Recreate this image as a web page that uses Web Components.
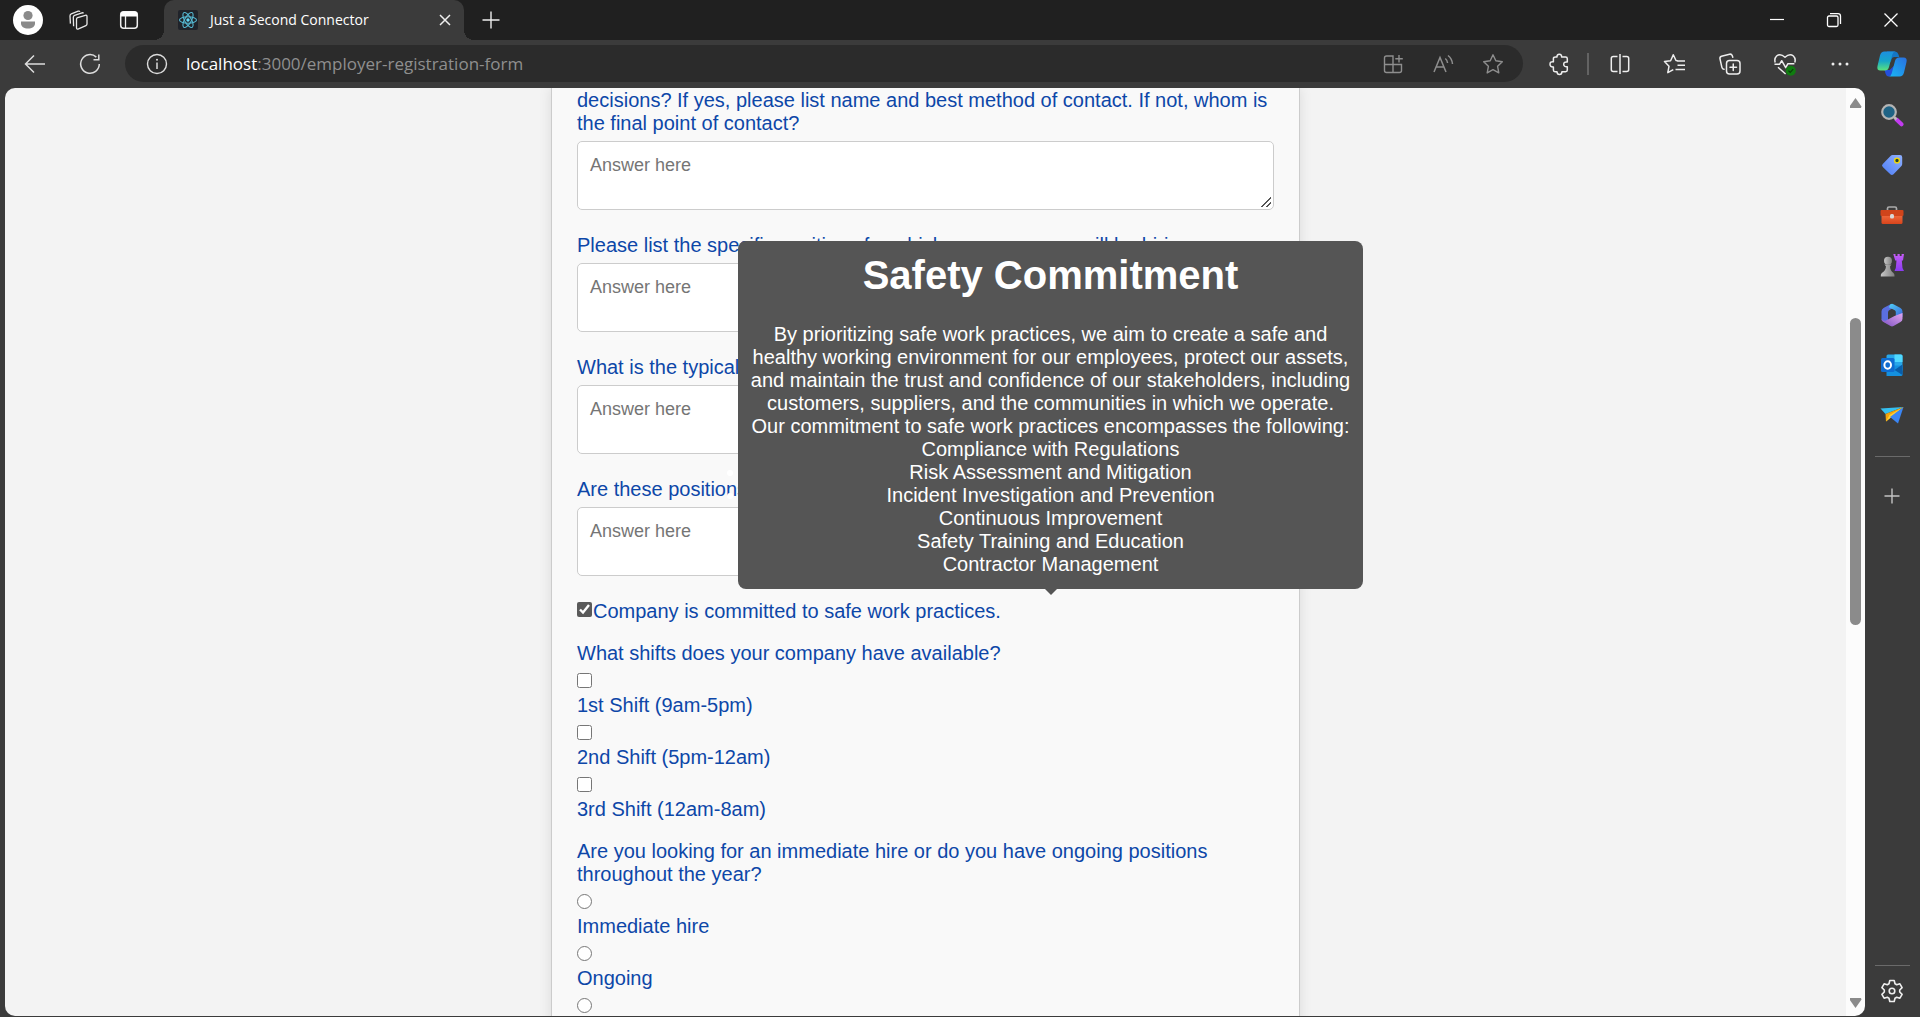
<!DOCTYPE html>
<html lang="en">
<head>
<meta charset="utf-8">
<title>Just a Second Connector</title>
<style>
  html, body { height: 100%; margin: 0; }
  body { background: #3b3b3b; font-family: "Liberation Sans", Arial, sans-serif; font-size: 20px; line-height: 23px; overflow: hidden; }
</style>
</head>
<body>
<browser-window></browser-window>

<script>
const GRADIENTS = `<defs>
  <linearGradient id="g1" x1="0" y1="0" x2="0" y2="1"><stop offset="0" stop-color="#1d8fe0"/><stop offset=".5" stop-color="#16a5c9"/><stop offset="1" stop-color="#5be37c"/></linearGradient>
  <linearGradient id="g2" x1="1" y1="0" x2="0" y2="1"><stop offset="0" stop-color="#2a6fe0"/><stop offset="1" stop-color="#18b8f5"/></linearGradient>
  <linearGradient id="g3" x1="1" y1="0" x2="0" y2="1"><stop offset="0" stop-color="#8fb0ff"/><stop offset="1" stop-color="#4d7df5"/></linearGradient>
  <linearGradient id="g4" x1="0" y1="0" x2="0" y2="1"><stop offset="0" stop-color="#f0683c"/><stop offset="1" stop-color="#d8451c"/></linearGradient>
  <linearGradient id="g5" x1="0" y1="0" x2="1" y2="0"><stop offset="0" stop-color="#c8c8c8"/><stop offset="1" stop-color="#7f7f7f"/></linearGradient>
  <linearGradient id="g6" x1="0" y1="0" x2="0" y2="1"><stop offset="0" stop-color="#c45cf5"/><stop offset="1" stop-color="#8a3cf0"/></linearGradient>
  <linearGradient id="g7" x1="0" y1="0" x2="1" y2="1"><stop offset="0" stop-color="#4fd0f5"/><stop offset="1" stop-color="#3a63d8"/></linearGradient>
  <linearGradient id="g8" x1="0" y1="1" x2="1" y2="0"><stop offset="0" stop-color="#7b4fc0"/><stop offset="1" stop-color="#e3a8f0"/></linearGradient>
</defs>`;

const ICONS = {
  avatar: [32, `<circle cx="16" cy="16" r="15" fill="#fff"/><circle cx="16" cy="11.5" r="4.6" fill="#8a8a8a"/><path d="M9 17.5h14v2c0 3-3 5-7 5s-7-2-7-5z" fill="#8a8a8a"/>`],
  workspaces: [24, `<g fill="none" stroke="#e8e8e8" stroke-width="1.3" stroke-linejoin="round"><path d="M10.500 11.200q0-1.200 1.200-1.600l7.600-2.300q1.700-.4 1.700 1.200v7.500q0 1.100-1.100 1.600l-7.400 3.300q-2 .7-2-1.200z"/><path d="M7.600 18.300 7.300 9.300q0-1.400 1.300-1.900l7.400-2.600q1-.3 1.500.5"/><path d="M4.400 15.600 4 8q0-1.600 1.300-2.100l6.900-2.700q1.300-.4 1.700.5"/></g>`],
  tabactions: [24, `<rect x="3.700" y="3.700" width="16.600" height="16.600" rx="3" fill="none" stroke="#f0f0f0" stroke-width="1.500"/><path d="M3.700 8.500V6.500q0-3 3-3h10.600q3 0 3 3v2z" fill="#fff"/><path d="M8.500 8v12" stroke="#f0f0f0" stroke-width="1.300"/>`],
  react: [20, `<rect width="20" height="20" rx="2" fill="#20232a"/><g fill="none" stroke="#56b9d3" stroke-width="1.100"><ellipse cx="10" cy="10" rx="8.500" ry="3.300"/><ellipse cx="10" cy="10" rx="8.500" ry="3.300" transform="rotate(60 10 10)"/><ellipse cx="10" cy="10" rx="8.500" ry="3.300" transform="rotate(120 10 10)"/></g><circle cx="10" cy="10" r="1.700" fill="#61dafb"/>`],
  close: [24, `<path d="M7 7l10 10M17 7 7 17" stroke="#eee" stroke-width="1.500"/>`],
  plus: [24, `<path d="M3.500 12h17M12 3.500v17" stroke="#eee" stroke-width="1.400"/>`],
  plusdim: [24, `<path d="M4.500 12h15M12 4.500v15" stroke="#c4c4c4" stroke-width="1.400"/>`],
  back: [24, `<path d="M22 12H2.500M11 3.500 2.500 12l8.500 8.500" fill="none" stroke="#ddd" stroke-width="1.500"/>`],
  reload: [24, `<path d="M21.300 12a9.300 9.300 0 1 1-3-6.900M20.800 2.500v5.200h-5.300" fill="none" stroke="#ddd" stroke-width="1.500"/>`],
  info: [24, `<circle cx="12" cy="12" r="9.500" fill="none" stroke="#ddd" stroke-width="1.400"/><path d="M12 10.500v6.500" stroke="#ddd" stroke-width="1.500"/><circle cx="12" cy="7.700" r="1" fill="#ddd"/>`],
  apps: [24, `<g fill="none" stroke="#8e8e8e" stroke-width="1.400"><path d="M12 12.500V4H5.500Q3.500 4 3.500 6v12.500q0 2 2 2h13q2 0 2-2v-6h-17M12 12.500v8M18 3v7.500M14.300 6.800h7.500"/></g>`],
  aloud: [24, `<g fill="none" stroke="#8e8e8e" stroke-width="1.500"><path d="M3 20 9 5.500 15 20M5.200 15h7.700M14.300 6.500q2 1.700 2.300 4.500M17 3.500q4 3 4.500 8.500"/></g>`],
  star: [24, `<path d="M12 2.800l2.800 6 6.500.9-4.700 4.600 1.200 6.600-5.800-3.200-5.800 3.200 1.200-6.600-4.700-4.600 6.500-.9z" fill="none" stroke="#8e8e8e" stroke-width="1.400" stroke-linejoin="round"/>`],
  puzzle: [24, `<path d="M8.500 5H10q-.2-2.700 2.300-2.700T14.600 5h4q1.700 0 1.700 1.700V10q-3.600-.4-3.600 2.300t3.600 2.400v3.400q0 1.600-1.700 1.600h-3.700q0 2.800-2.400 2.800T10 19.700H8q-1.600 0-1.600-1.600V15q-3.400.2-3.400-2.700t3.400-2.500V6.600Q6.400 5 8.500 5z" fill="none" stroke="#eee" stroke-width="1.500" stroke-linejoin="round"/>`],
  split: [24, `<g fill="none" stroke="#eee" stroke-width="1.500"><path d="M9.500 4.500H5.300q-2 0-2 2v11q0 2 2 2h4.200M14.500 4.500h4.200q2 0 2 2v11q0 2-2 2h-4.200M12 2v20"/></g>`],
  favlist: [24, `<g fill="none" stroke="#eee" stroke-width="1.500" stroke-linejoin="round"><path d="M14.700 8.800 13 8.500 10.300 2.800 7.600 8.700l-6.100.9 4.500 4.700-1.200 6.400 5.500-3M14 9h8M14.500 13.300H22M12.500 17.500H22"/></g>`],
  collections: [24, `<g fill="none" stroke="#eee" stroke-width="1.500" stroke-linecap="round"><rect x="8.500" y="8.500" width="13.500" height="13.500" rx="3"/><path d="M15.250 12v6.500M12 15.250h6.500M6 17.300q-1.700-.3-2.100-2L2 6.800q-.4-2 1.500-2.600L11.500 2.200q2-.4 2.700 1.400l.6 1.600"/></g>`],
  heart: [24, `<g fill="none" stroke="#eee" stroke-width="1.500" stroke-linejoin="round"><path d="M2.200 10.500Q1 6.500 3.600 4q3.800-3 8.400 1.300Q16.600 1 20.400 4q2.600 2.500 1.400 6.500"/><path d="M1.500 12.300h5l2.200-3.600 4 7 2.200-4h6.500M5 15.300l7.600 6.700"/></g><circle cx="17.800" cy="18.700" r="5" fill="#107c10"/><path d="M15.500 18.700l1.700 1.700 3-3.200" fill="none" stroke="#0a3d0a" stroke-width="1.200"/>`],
  dots: [24, `<circle cx="5" cy="12" r="1.500" fill="#eee"/><circle cx="12" cy="12" r="1.500" fill="#eee"/><circle cx="19" cy="12" r="1.500" fill="#eee"/>`],
  copilot: [32, GRADIENTS + `<path d="M19 3.500q2.500 0 3.300 2.500l1 3h-5q-2 0-2.700 2l-1 3.500L11 3.500z" fill="#1576c4"/><path d="M13 28.500q-2.500 0-3.300-2.500l-1.200-4h5.200l4-4 3 6.500z" fill="#2450dd"/><path d="M8.500 3.500h11q-2.300 0-3.200 3L13 19q-.9 3.500-4 3.500H4.500Q.5 22.500 1.500 18L4 7.500q1-4 4.500-4z" fill="url(#g1)"/><path d="M23.500 28.500h-11q2.300 0 3.200-3L19 13q.9-3.500 4-3.500h4.500q4 0 3 4.500L28 24.500q-1 4-4.500 4z" fill="url(#g2)"/>`],
  min: [24, `<path d="M5 11.500h14" stroke="#fff" stroke-width="1.200"/>`],
  restore: [24, `<g fill="none" stroke="#fff" stroke-width="1.300"><rect x="5.500" y="8" width="10.500" height="10.500" rx="1.500"/><path d="M8 5.600h8q2.500 0 2.500 2.500v8"/></g>`],
  exit: [24, `<path d="M5.500 5.500l13 13M18.500 5.500l-13 13" stroke="#fff" stroke-width="1.300"/>`],
  search: [24, `<path d="M16.500 16.500l5 4.800" stroke="#c23bf0" stroke-width="4" stroke-linecap="round"/><path d="M14 14l2.500 2.500" stroke="#bbb" stroke-width="2.500"/><circle cx="9" cy="9" r="6.800" fill="#1f6385" stroke="#b4b4b4" stroke-width="2.200"/>`],
  tag: [24, GRADIENTS + `<path d="M12.500 2H20q2.200 0 2.200 2.200V11q0 1.300-1 2.300l-7.700 8q-1.600 1.500-3.200 0l-7.500-7.200q-1.600-1.500 0-3L10.500 3q.9-1 2-1z" fill="url(#g3)"/><circle cx="17" cy="7.500" r="2.400" fill="#243" stroke="#f5d90a" stroke-width="1.400"/>`],
  toolbox: [24, GRADIENTS + `<path d="M7.500 7V5.500Q7.500 4 9 4h6q1.500 0 1.500 1.500V7" fill="none" stroke="#aaa" stroke-width="1.700"/><rect x="1.500" y="12" width="21" height="9" rx="1.500" fill="url(#g4)"/><rect x=".5" y="7" width="23" height="6" rx="1" fill="#d0441b"/><rect x="10" y="11" width="4" height="4.500" rx="1.500" fill="#d8d8d8"/>`],
  chess: [24, GRADIENTS + `<path d="M13.300 1h2.200v2h2V1h2.200v2h1.900V1H24l-1 6.500h-1.200l.7 7.500 1.500 3h-9.500l1.300-3 .7-7.500h-1.300z" fill="url(#g6)"/><circle cx="8" cy="7.800" r="4" fill="url(#g5)"/><path d="M4.500 11.500h7L10 13.500q.2 4 3.500 6.500 1.300 1.200 1 3.500H.8q-.3-2.300 1-3.500 3.900-2.500 4.200-6.500z" fill="url(#g5)"/>`],
  m365: [24, GRADIENTS + `<path d="M10.500 1.200 3.500 5Q1.500 6.200 1.500 8.500V16q0 1.500 1.300 2.300L8 21V9.500q0-1.700 1.500-2.500L15 4l-2-2.300q-1.200-1.200-2.500-.5z" fill="#5a6fe0"/><path d="M10.500 1.200q1.500-.8 3 0L20.500 5q2 1.200 2 3.500V14l-6.700-1V9q0-1.200-1-1.700L8.700 4.200z" fill="url(#g7)"/><path d="M22.500 10v5.700q0 2.200-2 3.400l-7 3.900q-1.500.8-3 0L3 18.700q-1.500-1-1.500-3 2 3 5 1.500l8-4.200z" fill="url(#g8)"/>`],
  outlook: [24, `<rect x="6.500" y="1.500" width="16" height="17" rx="1.500" fill="#28a8ea"/><path d="M14.500 1.500H21q1.500 0 1.500 1.500v6h-8z" fill="#50d9ff"/><path d="M6.500 12.500l16 0v9q0 1.500-1.500 1.500H6.500z" fill="#1490df"/><path d="M22.500 11.500V22l-8-5z" fill="#0a5da8"/><rect x="1" y="5" width="13.500" height="14" rx="1.500" fill="#0f6cd0"/><ellipse cx="7.700" cy="12" rx="3.300" ry="3.700" fill="none" stroke="#fff" stroke-width="2"/>`],
  send: [24, `<path d="M.5 5.500 23.500 4 5.500 11z" fill="#35c0f0"/><path d="M23.500 4 5.500 11l.5 7.500z" fill="#f5a40a"/><path d="M23.500 4 6 18.500l3.500-6.500z" fill="#ffcf33"/><path d="M23.500 4 18 20.500 10 14z" fill="#3a86f5"/>`],
  gear: [24, `<g fill="none" stroke="#eee" stroke-width="1.600" stroke-linejoin="round"><path d="M9.800 1.500h4.400l.8 3.300 1.700 1 3.200-1 2.200 3.900-2.400 2.300v2l2.400 2.300-2.200 3.900-3.200-1-1.700 1-.8 3.300H9.800L9 19.200l-1.700-1-3.200 1-2.200-3.900L4.300 13v-2L1.900 8.700l2.200-3.900 3.200 1 1.700-1z"/><circle cx="12" cy="12" r="2.800"/></g>`]
};

const define = (name, html, init) => {
  const template = document.createElement('template');
  template.innerHTML = html;
  customElements.define(name, class extends HTMLElement {
    constructor() {
      super();
      this.attachShadow({ mode: 'open' }).append(template.content.cloneNode(true));
    }
    connectedCallback() { if (init) init(this, this.shadowRoot); }
  });
};

/* Icon looked up by name, sized by --size */
define('ui-icon', `<style>
  :host { display: block; width: var(--size, 24px); height: var(--size, 24px); flex: none; }
  svg { display: block; width: 100%; height: 100%; }
</style>`, (el, root) => {
  const [box, body] = ICONS[el.getAttribute('name')];
  root.innerHTML += `<svg viewBox="0 0 ${box} ${box}" aria-hidden="true">${body}</svg>`;
});

/* Icon button; its width and height come from its bar */
define('icon-button', `<style>
  :host { display: block; flex: none; width: var(--w, 50px); height: var(--h, 40px); }
  button { all: unset; box-sizing: border-box; width: 100%; height: 100%; display: flex; align-items: center; justify-content: center; }
</style><button type="button"></button>`, (el, root) => {
  const button = root.querySelector('button');
  button.setAttribute('aria-label', el.getAttribute('label'));
  const icon = document.createElement('ui-icon');
  icon.setAttribute('name', el.getAttribute('icon'));
  button.replaceChildren(icon);
});

define('tab-strip', `<style>
  :host { display: flex; height: 40px; padding-right: 1px; background: #202020; font-family: "Open Sans", sans-serif; font-size: 14px; line-height: 20px; color: #fff; }
  .left { display: flex; padding-left: 3px; padding-right: 9px; }
  .tab { position: relative; box-sizing: border-box; width: 300px; display: flex; align-items: center; gap: 12px; padding: 0 6px 0 14px; background: #3b3b3b; border-radius: 10px 10px 0 0; }
  .tab::before, .tab::after { content: ""; position: absolute; bottom: 0; width: 10px; height: 10px; }
  .tab::before { left: -10px; background: radial-gradient(circle at 0 0, #202020 10px, #3b3b3b 10px); }
  .tab::after { right: -10px; background: radial-gradient(circle at 100% 0, #202020 10px, #3b3b3b 10px); }
  .title { flex: 1; white-space: nowrap; }
  .spacer { flex: 1; }
  .controls { display: flex; --w: 57px; }
</style>
<div class="left">
  <icon-button icon="avatar" label="Profile" style="--size:32px"></icon-button>
  <icon-button icon="workspaces" label="Workspaces" style="--w:49px"></icon-button>
  <icon-button icon="tabactions" label="Tab actions" style="--w:53px"></icon-button>
</div>
<div class="tab">
  <ui-icon name="react" style="--size:20px"></ui-icon>
  <span class="title">Just a Second Connector</span>
  <icon-button icon="close" label="Close tab" style="--w:26px"></icon-button>
</div>
<icon-button icon="plus" label="New tab" style="--w:53px"></icon-button>
<div class="spacer"></div>
<div class="controls">
  <icon-button icon="min" label="Minimize"></icon-button>
  <icon-button icon="restore" label="Restore"></icon-button>
  <icon-button icon="exit" label="Close"></icon-button>
</div>`);

define('address-bar', `<style>
  :host { display: flex; align-items: center; height: 48px; padding: 0 3px 1px 7px; box-sizing: border-box; font-family: "Open Sans", sans-serif; font-size: 17px; line-height: 24px; --w: 55px; }
  .box { flex: 1; display: flex; align-items: center; height: 37px; margin: 0 11px 0 8px; padding: 0 5px; border-radius: 19px; background: #2b2b2b; --w: 50px; --h: 37px; }
  .url { flex: 1; padding-left: 2px; color: #8f8f8f; }
  .url b { font-weight: 400; color: #fff; }
  .rule { flex: none; width: 8px; height: 22px; background: linear-gradient(#636363, #636363) center / 2px 100% no-repeat; }
</style>
<icon-button icon="back" label="Back"></icon-button>
<icon-button icon="reload" label="Reload"></icon-button>
<div class="box">
  <icon-button icon="info" label="Site information" style="--w:54px"></icon-button>
  <span class="url"><b>localhost</b>:3000/employer-registration-form</span>
  <icon-button icon="apps" label="Apps"></icon-button>
  <icon-button icon="aloud" label="Read aloud"></icon-button>
  <icon-button icon="star" label="Add to favorites"></icon-button>
</div>
<icon-button icon="puzzle" label="Extensions" style="--w:50px"></icon-button>
<div class="rule"></div>
<icon-button icon="split" label="Split screen"></icon-button>
<icon-button icon="favlist" label="Favorites"></icon-button>
<icon-button icon="collections" label="Collections"></icon-button>
<icon-button icon="heart" label="Browser essentials"></icon-button>
<icon-button icon="dots" label="Settings and more"></icon-button>
<icon-button icon="copilot" label="Copilot" style="--w:50px;--size:32px"></icon-button>`);

define('side-bar', `<style>
  :host { display: flex; flex-direction: column; align-items: center; flex: none; box-sizing: border-box; width: 55px; padding: 2px 1px 0 0; --w: 50px; --h: 50px; }
  hr { flex: none; width: 35px; height: 1px; margin: 0; border: 0; background: #6a6a6a; }
  .spacer { flex: 1; }
</style>
<icon-button icon="search" label="Search"></icon-button>
<icon-button icon="tag" label="Shopping"></icon-button>
<icon-button icon="toolbox" label="Tools"></icon-button>
<icon-button icon="chess" label="Games"></icon-button>
<icon-button icon="m365" label="Microsoft 365"></icon-button>
<icon-button icon="outlook" label="Outlook"></icon-button>
<icon-button icon="send" label="Drop"></icon-button>
<hr style="margin-top:16px">
<icon-button icon="plusdim" label="Customize" style="--h:78px"></icon-button>
<div class="spacer"></div>
<hr>
<icon-button icon="gear" label="Settings"></icon-button>`);

define('scroll-rail', `<style>
  :host { display: flex; flex-direction: column; align-items: center; flex: none; width: 19px; padding: 10px 0 8px; box-sizing: border-box; background: #fcfcfc; }
  .up, .down { flex: none; width: 12px; height: 10px; background: #8b8b8b; }
  .up { clip-path: polygon(50% 0, 100% 85%, 95% 100%, 5% 100%, 0 85%); }
  .down { clip-path: polygon(5% 0, 95% 0, 100% 15%, 50% 100%, 0 15%); }
  .before { flex: 210; } .thumb { flex: 306; width: 11px; border-radius: 6px; background: #8b8b8b; } .after { flex: 373; }
</style><div class="up"></div><div class="before"></div><div class="thumb"></div><div class="after"></div><div class="down"></div>`);

/* Open question: label passed in, answer typed below */
define('text-question', `<style>
  :host { display: flex; flex-direction: column; gap: 6px; margin-bottom: 24px; }
  textarea { box-sizing: border-box; width: 100%; height: 69px; margin: 0; padding: 13px 12px; border: 1px solid #ccc; border-radius: 5px; background: #fff; font: 18px/20px "Liberation Sans", Arial, sans-serif; resize: vertical; }
  textarea::placeholder { color: #757575; }
  textarea::-webkit-resizer { background: linear-gradient(135deg, transparent 49%, #555 49%, #555 57%, transparent 57%, transparent 73%, #555 73%, #555 81%, transparent 81%) 3px 3px / 10px 10px no-repeat; }
</style><label for="answer"><slot></slot></label><textarea id="answer" placeholder="Answer here"></textarea>`);

/* One choice, tick box or radio above its label */
define('choice-option', `<style>
  :host { display: flex; flex-direction: column; align-items: flex-start; gap: 6px; margin-top: 8px; }
  input { width: 15px; height: 15px; margin: 0; }
</style><input id="choice"><label for="choice"><slot></slot></label>`, (el, root) => {
  root.querySelector('input').type = el.getAttribute('type');
});

define('choice-group', `<style>
  :host { display: block; margin-bottom: 19px; }
</style><div role="group" aria-labelledby="caption"><div id="caption"><slot name="caption"></slot></div><slot></slot></div>`);

define('tool-tip', `<style>
  :host { position: absolute; left: 161px; bottom: calc(100% + 11px); z-index: 1; box-sizing: border-box; width: 625px; padding: 12px 8px 13px; border-radius: 8px; background: #555; color: #fff; text-align: center; }
  :host::after { content: ""; position: absolute; top: 100%; left: 50%; margin-left: -6px; border: 6px solid transparent; border-top-color: #555; border-bottom: 0; }
</style><slot></slot>`);

define('safety-check', `<style>
  :host { display: flex; align-items: flex-start; gap: 1px; position: relative; margin-bottom: 19px; }
  input { width: 15px; height: 15px; margin: 2px 0 0; accent-color: #5a5a5a; }
  h1 { margin: 0 0 26px; font-size: 40px; line-height: 44px; }
  p { margin: 0; }
  ul { margin: 0; padding: 0; }
</style>
<input type="checkbox" id="safe" checked><label for="safe">Company is committed to safe work practices.</label>
<tool-tip role="tooltip">
  <h1>Safety Commitment</h1>
  <p>By prioritizing safe work practices, we aim to create a safe and healthy working environment for our employees, protect our assets, and maintain the trust and confidence of our stakeholders, including customers, suppliers, and the communities in which we operate.</p>
  <p>Our commitment to safe work practices encompasses the following:</p>
  <ul>
    <li>Compliance with Regulations</li>
    <li>Risk Assessment and Mitigation</li>
    <li>Incident Investigation and Prevention</li>
    <li>Continuous Improvement</li>
    <li>Safety Training and Education</li>
    <li>Contractor Management</li>
  </ul>
</tool-tip>`);

define('registration-form', `<style>
  :host { display: block; flex: 1; min-width: 0; overflow: hidden; background: #f3f3f3; color: #0d47a8; }
  form { box-sizing: border-box; width: 749px; max-width: 100%; margin: 0 auto; padding: 1px 25px 25px; border: 1px solid #ccc; border-width: 0 1px; background: #f9f9f9; box-shadow: 0 0 12px rgba(0,0,0,.1); }
</style>
<form>
  <text-question>decisions? If yes, please list name and best method of contact. If not, whom is the final point of contact?</text-question>
  <text-question>Please list the specific positions for which your company will be hiring.</text-question>
  <text-question>What is the typical</text-question>
  <text-question>Are these positions</text-question>
  <safety-check></safety-check>
  <choice-group>
    <span slot="caption">What shifts does your company have available?</span>
    <choice-option type="checkbox">1st Shift (9am-5pm)</choice-option>
    <choice-option type="checkbox">2nd Shift (5pm-12am)</choice-option>
    <choice-option type="checkbox">3rd Shift (12am-8am)</choice-option>
  </choice-group>
  <choice-group>
    <span slot="caption">Are you looking for an immediate hire or do you have ongoing positions throughout the year?</span>
    <choice-option type="radio">Immediate hire</choice-option>
    <choice-option type="radio">Ongoing</choice-option>
    <choice-option type="radio"></choice-option>
  </choice-group>
</form>`);

define('browser-window', `<style>
  :host { display: flex; flex-direction: column; height: 100vh; background: #3b3b3b; }
  .main { flex: 1; min-height: 0; display: flex; padding: 0 0 1px 5px; }
  .view { flex: 1; min-width: 0; display: flex; overflow: hidden; border-radius: 10px; }
</style>
<tab-strip></tab-strip>
<address-bar></address-bar>
<div class="main">
  <div class="view"><registration-form></registration-form><scroll-rail></scroll-rail></div>
  <side-bar></side-bar>
</div>`);
</script>
</body>
</html>
